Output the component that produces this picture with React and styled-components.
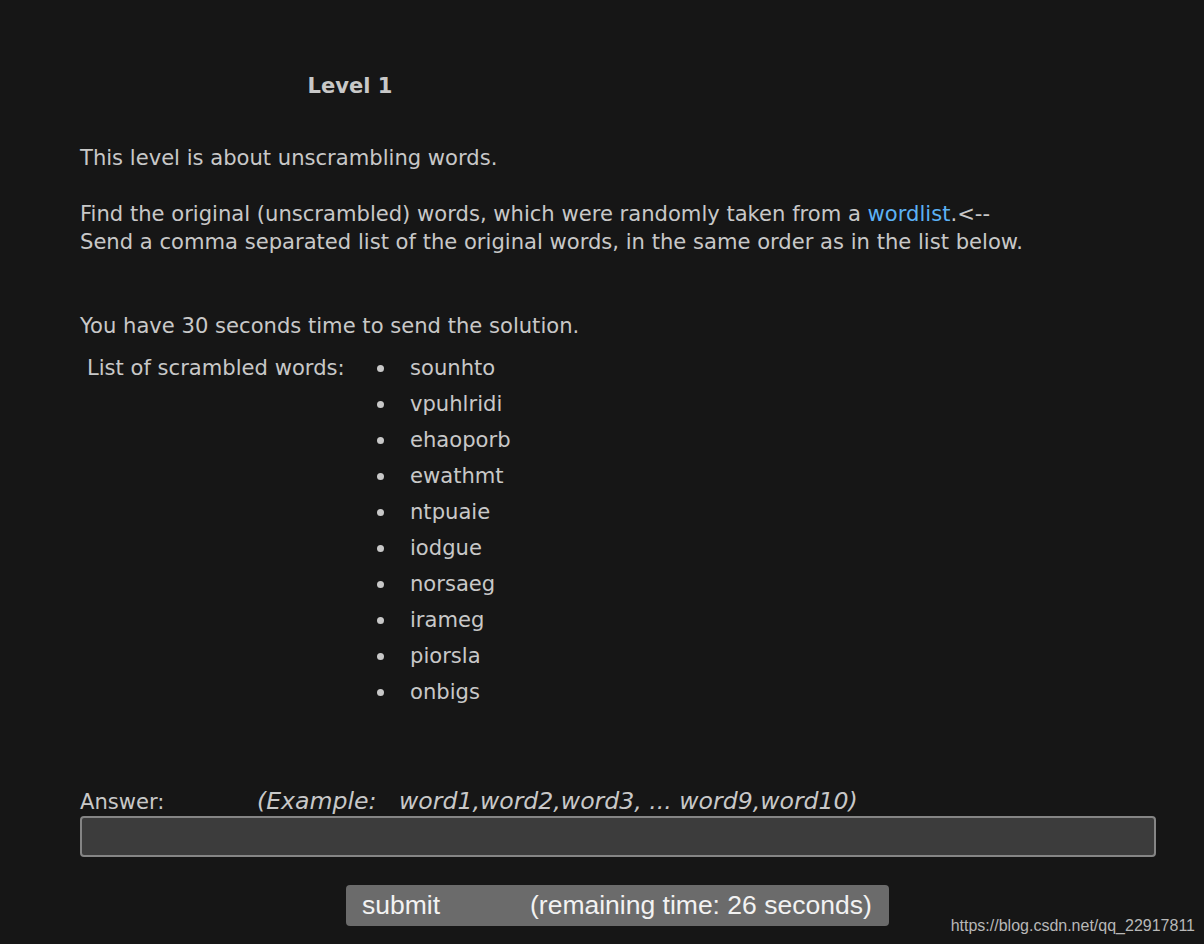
import React from 'react';
import styled, { createGlobalStyle } from 'styled-components';

const GlobalStyle = createGlobalStyle`
  html, body {
    margin: 0;
    padding: 0;
    background: #161616;
  }
  body {
    font-family: 'DejaVu Sans', Verdana, sans-serif;
    color: #c8c8c8;
  }
`;

const Page = styled.div`
  position: relative;
  width: 1204px;
  height: 944px;
  box-sizing: border-box;
  padding: 72px 48px 0 80px;
  font-size: 21.1px;
  line-height: 28px;
`;

const Heading = styled.div`
  width: 540px;
  text-align: center;
  font-weight: bold;
  margin-bottom: 44px;
`;

const Para = styled.p`
  margin: 0 0 ${(p) => p.$gap || 28}px;
`;

const Link = styled.a`
  color: #5cb1f5;
  text-decoration: none;
`;

const WordsTable = styled.div`
  display: grid;
  grid-template-columns: 290px 1fr;
  padding-left: 7px;
`;

const Label = styled.div`
  line-height: 28px;
`;

const WordList = styled.ul`
  list-style: none;
  margin: 0;
  padding: 0;
`;

const Word = styled.li`
  display: flex;
  align-items: center;
  height: 28px;
  margin-bottom: 8px;
`;

const Bullet = styled.span`
  width: 7px;
  height: 7px;
  border-radius: 50%;
  background: #c8c8c8;
  margin: 0 26px 0 0;
  flex: none;
`;

const AnswerRow = styled.div`
  display: flex;
  align-items: baseline;
  margin-top: 73px;
  line-height: 28px;
`;

const AnswerLabel = styled.span`
  width: 177px;
`;

const Example = styled.span`
  font-style: italic;
  font-size: 23.6px;
`;

const AnswerInput = styled.input`
  display: block;
  box-sizing: border-box;
  width: 1076px;
  height: 41px;
  margin-top: 0;
  background: #3c3c3c;
  border: 2px solid #858585;
  border-radius: 4px;
  color: #ddd;
  font: inherit;
  padding: 0 8px;
  outline: none;
`;

const SubmitButton = styled.button`
  display: flex;
  align-items: center;
  box-sizing: border-box;
  width: 543px;
  height: 41px;
  margin: 28px 0 0 266px;
  padding: 0 16px;
  background: #6b6b6b;
  border: none;
  border-radius: 4px;
  color: #f2f2f2;
  font-family: 'Liberation Sans', Arial, sans-serif;
  font-size: 26.5px;
  cursor: pointer;
`;

const ButtonLabel = styled.span`
  width: 168px;
  text-align: left;
`;

const Watermark = styled.div`
  position: absolute;
  right: 9px;
  bottom: 4px;
  font-family: 'Liberation Sans', Arial, sans-serif;
  font-size: 16px;
  color: #b8b8b8;
`;

const words = [
  'sounhto',
  'vpuhlridi',
  'ehaoporb',
  'ewathmt',
  'ntpuaie',
  'iodgue',
  'norsaeg',
  'irameg',
  'piorsla',
  'onbigs',
];

export default function App() {
  return (
    <>
      <GlobalStyle />
      <Page>
        <Heading>Level 1</Heading>
        <Para>This level is about unscrambling words.</Para>
        <Para $gap={56}>
          Find the original (unscrambled) words, which were randomly taken from a{' '}
          <Link href="#">wordlist</Link>.&lt;--
          <br />
          Send a comma separated list of the original words, in the same order as in the list below.
        </Para>
        <Para $gap={14}>You have 30 seconds time to send the solution.</Para>
        <WordsTable>
          <Label>List of scrambled words:</Label>
          <WordList>
            {words.map((w) => (
              <Word key={w}>
                <Bullet />
                {w}
              </Word>
            ))}
          </WordList>
        </WordsTable>
        <AnswerRow>
          <AnswerLabel>Answer:</AnswerLabel>
          <Example>(Example:&nbsp;&nbsp; word1,word2,word3, ... word9,word10)</Example>
        </AnswerRow>
        <AnswerInput type="text" />
        <SubmitButton type="button">
          <ButtonLabel>submit</ButtonLabel>
          <span>(remaining time: 26 seconds)</span>
        </SubmitButton>
        <Watermark>https://blog.csdn.net/qq_22917811</Watermark>
      </Page>
    </>
  );
}
